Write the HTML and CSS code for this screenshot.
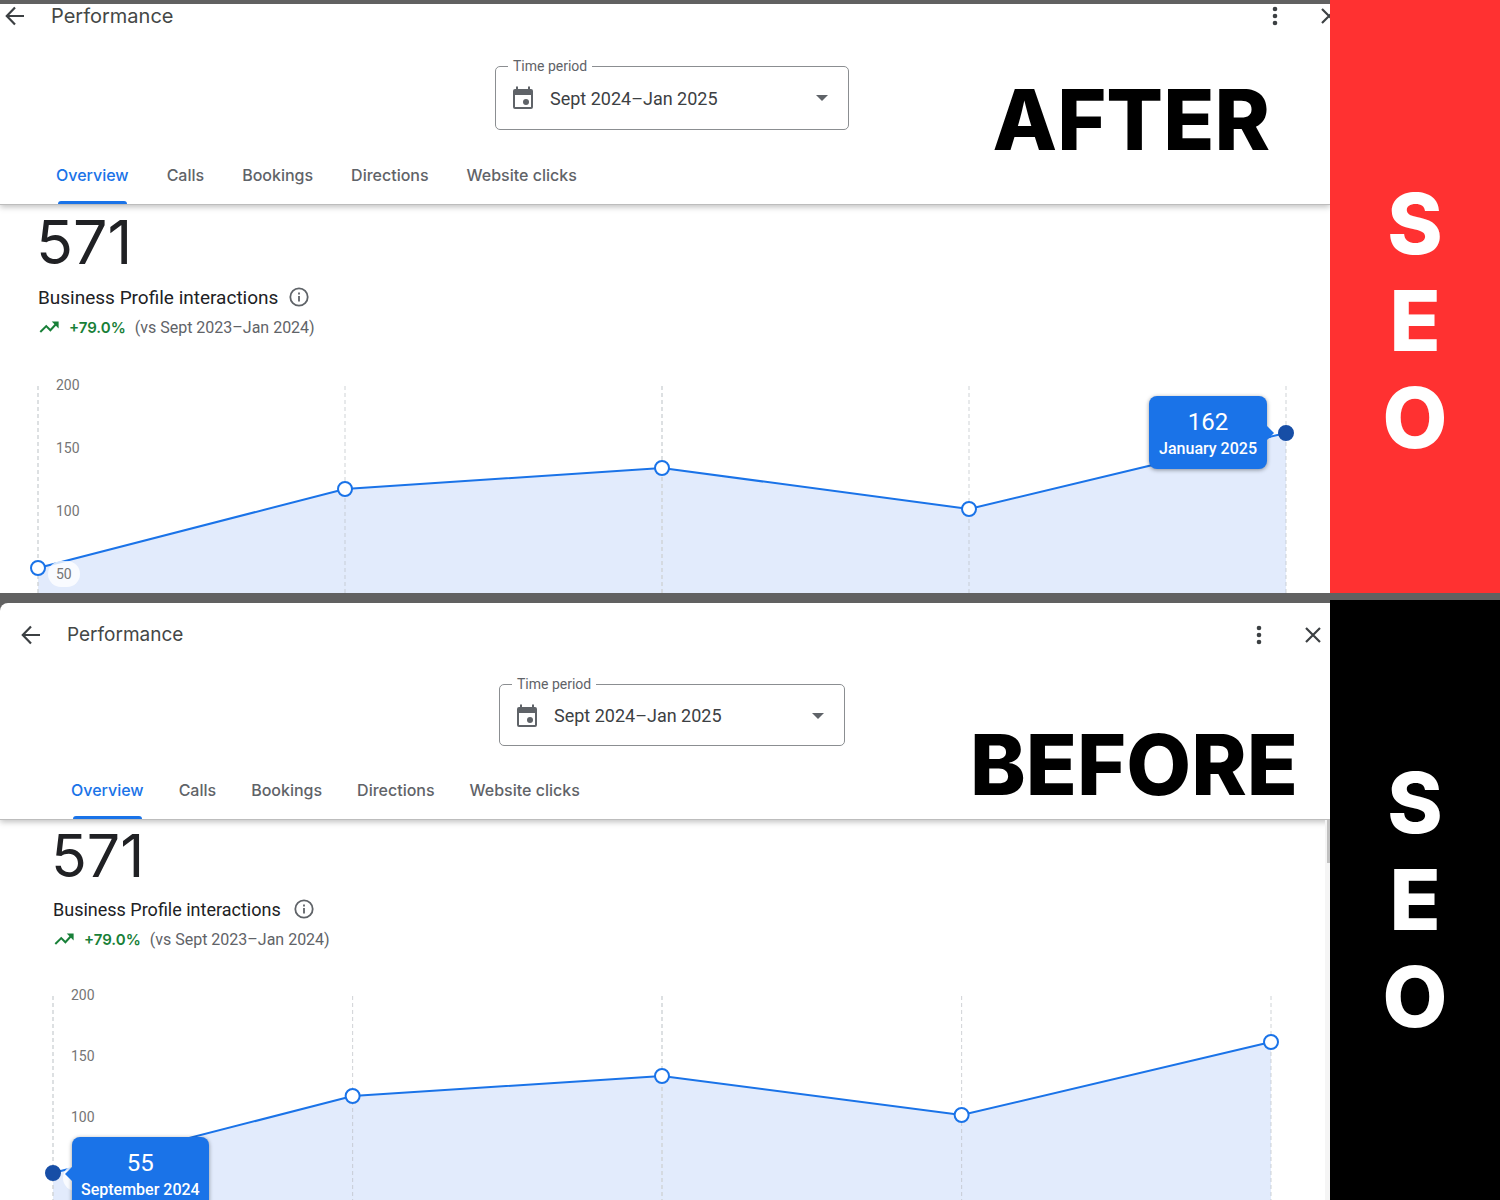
FILE: index.html
```
<!DOCTYPE html>
<html lang="en">
<head>
    <meta charset="UTF-8">
    <meta name="viewport" content="width=device-width, initial-scale=1.0">
    <title>Performance - Before and After SEO</title>
    <link rel="stylesheet" href="styles.css">
</head>
<body>
    <!-- shared icons -->
    <svg class="icon-defs" aria-hidden="true">
        <symbol id="icon-back" viewBox="0 0 24 24">
            <path d="M12 3.5L3.8 12l8.2 8.5M4 12h17" fill="none" stroke="currentColor" stroke-width="2.2"/>
        </symbol>
        <symbol id="icon-more" viewBox="0 0 24 24">
            <circle cx="12" cy="5" r="2.3"/><circle cx="12" cy="12" r="2.3"/><circle cx="12" cy="19" r="2.3"/>
        </symbol>
        <symbol id="icon-close" viewBox="0 0 24 24">
            <path d="M5 5l14 14M19 5L5 19" fill="none" stroke="currentColor" stroke-width="2.2"/>
        </symbol>
        <symbol id="icon-calendar" viewBox="0 0 24 24">
            <path fill-rule="evenodd" d="M5 1.500h2V4h10V1.500h2V4h1a2 2 0 0 1 2 2v16a2 2 0 0 1-2 2H4a2 2 0 0 1-2-2V6a2 2 0 0 1 2-2h1zM4 10v12h16V10z"/>
            <circle cx="15" cy="17" r="3"/>
        </symbol>
        <symbol id="icon-info" viewBox="0 0 24 24">
            <circle cx="12" cy="12" r="8.7" fill="none" stroke="currentColor" stroke-width="1.8"/>
            <path d="M11.100 11h1.800v5.500h-1.800zM11.100 7.500h1.800v1.900h-1.800z"/>
        </symbol>
        <symbol id="icon-trend" viewBox="0 0 24 24">
            <path d="M2.500 17.500l6.500-6.500 4.500 4.500L20 8.500" fill="none" stroke="currentColor" stroke-width="2.2"/>
            <path d="M15 6h7.500v7.500z"/>
        </symbol>
    </svg>

    <main class="comparison">
        <section class="panel after">
            <header class="app-bar">
                <button type="button" class="icon-button" aria-label="Back"><svg><use href="#icon-back"/></svg></button>
                <h1>Performance</h1>
                <button type="button" class="icon-button" aria-label="More options"><svg><use href="#icon-more"/></svg></button>
                <button type="button" class="icon-button" aria-label="Close"><svg><use href="#icon-close"/></svg></button>
            </header>
            <div class="picker">
                <label for="period-after">Time period</label>
                <svg class="calendar"><use href="#icon-calendar"/></svg>
                <select id="period-after">
                    <option>Sept 2024–Jan 2025</option>
                </select>
            </div>
            <p class="stamp">AFTER</p>
            <nav class="tabs">
                <a href="#" class="active">Overview</a>
                <a href="#">Calls</a>
                <a href="#">Bookings</a>
                <a href="#">Directions</a>
                <a href="#">Website clicks</a>
            </nav>
            <div class="stats">
                <p class="value">571</p>
                <p class="caption">Business Profile interactions <svg><use href="#icon-info"/></svg></p>
                <p class="delta"><svg><use href="#icon-trend"/></svg> <strong>+79.0%</strong> <span>(vs Sept 2023–Jan 2024)</span></p>
            </div>
            <div class="chart">
                <svg class="plot">
                    <svg viewBox="0 0 1000 207" preserveAspectRatio="none">
                        <polygon class="area" points="0,182 246,103 500,82 746,123 1000,47 1000,207 0,207"/>
                        <polyline class="line" points="0,182 246,103 500,82 746,123 1000,47"/>
                    </svg>
                    <g class="guides">
                        <line x1="0" x2="0" y2="100%" class="strong"/>
                        <line x1="24.6%" x2="24.6%" y2="100%"/>
                        <line x1="50%" x2="50%" y2="100%" class="strong"/>
                        <line x1="74.6%" x2="74.6%" y2="100%"/>
                        <line x1="100%" x2="100%" y2="100%"/>
                    </g>
                    <g class="points">
                        <circle cx="0" cy="182" r="7"/>
                        <circle cx="24.6%" cy="103" r="7"/>
                        <circle cx="50%" cy="82" r="7"/>
                        <circle cx="74.6%" cy="123" r="7"/>
                        <circle cx="100%" cy="47" r="7" class="selected"/>
                    </g>
                </svg>
                <ul class="axis">
                    <li><span>200</span></li>
                    <li><span>150</span></li>
                    <li><span>100</span></li>
                    <li><span>50</span></li>
                </ul>
                <div class="tooltip">
                    <b>162</b>
                    <span>January 2025</span>
                </div>
            </div>
        </section>
        <aside class="banner red">
            <span>S</span>
            <span>E</span>
            <span>O</span>
        </aside>

        <section class="panel before">
            <header class="app-bar">
                <button type="button" class="icon-button" aria-label="Back"><svg><use href="#icon-back"/></svg></button>
                <h1>Performance</h1>
                <button type="button" class="icon-button" aria-label="More options"><svg><use href="#icon-more"/></svg></button>
                <button type="button" class="icon-button" aria-label="Close"><svg><use href="#icon-close"/></svg></button>
            </header>
            <div class="picker">
                <label for="period-before">Time period</label>
                <svg class="calendar"><use href="#icon-calendar"/></svg>
                <select id="period-before">
                    <option>Sept 2024–Jan 2025</option>
                </select>
            </div>
            <p class="stamp">BEFORE</p>
            <nav class="tabs">
                <a href="#" class="active">Overview</a>
                <a href="#">Calls</a>
                <a href="#">Bookings</a>
                <a href="#">Directions</a>
                <a href="#">Website clicks</a>
            </nav>
            <div class="stats">
                <div class="scrollbar"></div>
                <p class="value">571</p>
                <p class="caption">Business Profile interactions <svg><use href="#icon-info"/></svg></p>
                <p class="delta"><svg><use href="#icon-trend"/></svg> <strong>+79.0%</strong> <span>(vs Sept 2023–Jan 2024)</span></p>
            </div>
            <div class="chart">
                <svg class="plot">
                    <svg viewBox="0 0 1000 204" preserveAspectRatio="none">
                        <polygon class="area" points="0,177 246,100 500,80 746,119 1000,46 1000,204 0,204"/>
                        <polyline class="line" points="0,177 246,100 500,80 746,119 1000,46"/>
                    </svg>
                    <g class="guides">
                        <line x1="0" x2="0" y2="100%" class="strong"/>
                        <line x1="24.6%" x2="24.6%" y2="100%"/>
                        <line x1="50%" x2="50%" y2="100%" class="strong"/>
                        <line x1="74.6%" x2="74.6%" y2="100%"/>
                        <line x1="100%" x2="100%" y2="100%"/>
                    </g>
                    <g class="points">
                        <circle cx="0" cy="177" r="7" class="selected"/>
                        <circle cx="24.6%" cy="100" r="7"/>
                        <circle cx="50%" cy="80" r="7"/>
                        <circle cx="74.6%" cy="119" r="7"/>
                        <circle cx="100%" cy="46" r="7"/>
                    </g>
                </svg>
                <!-- lowest label sits behind the tooltip, so its pill is empty -->
                <ul class="axis">
                    <li><span>200</span></li>
                    <li><span>150</span></li>
                    <li><span>100</span></li>
                    <li><span></span></li>
                </ul>
                <div class="tooltip">
                    <b>55</b>
                    <span>September 2024</span>
                </div>
            </div>
        </section>
        <aside class="banner black">
            <span>S</span>
            <span>E</span>
            <span>O</span>
        </aside>
    </main>
</body>
</html>
```
FILE: styles.css
```
* {
    box-sizing: border-box;
}
body {
    margin: 0;
    background-color: #616161;
    color: #202124;
    font-family: Roboto, Arial, sans-serif;
}
h1, p, ul {
    margin: 0;
    padding: 0;
}
svg {
    fill: currentColor;
}
.icon-defs {
    display: none;
}
.comparison {
    display: grid;
    grid-template-columns: 1fr 170px;
}

/* Panels */
.panel {
    position: relative;
    overflow: hidden;
    background-color: #fff;
}
.after {
    --edge: 38px;
    margin-top: 4px;
}
.before {
    --edge: 53px;
    margin-top: 10px;
    border-top-left-radius: 8px;
}

/* Top bar */
.app-bar {
    display: flex;
    align-items: center;
    height: 24px;
    color: #3c4043;
}
.after .app-bar {
    margin: 0 -11px 0 3px;
}
.before .app-bar {
    margin: 20px 5px 0 19px;
}
.app-bar h1 {
    flex: 1;
    margin-left: 24px;
    font-family: Inter, sans-serif;
    font-size: 20px;
    font-weight: 400;
    line-height: 24px;
    color: #444746;
}
.before .app-bar h1 {
    font-size: 19px;
}
.icon-button {
    width: 24px;
    height: 24px;
    padding: 0;
    border: 0;
    background: none;
    color: inherit;
}
.icon-button + .icon-button {
    margin-left: 30px;
}
.icon-button svg {
    display: block;
    width: 24px;
    height: 24px;
}

/* Time period */
.picker {
    position: relative;
    width: 354px;
    margin: 38px auto 0;
    left: 7px;
}
.before .picker {
    width: 346px;
    margin-top: 37px;
}
.picker label {
    position: absolute;
    top: -8px;
    left: 13px;
    padding: 0 5px;
    background-color: #fff;
    color: #5f6368;
    font-size: 14px;
    line-height: 16px;
}
.picker select {
    display: block;
    width: 100%;
    height: 64px;
    padding: 0 54px;
    border: 1px solid #8b8e91;
    border-radius: 5px;
    background: none;
    color: #3c4043;
    font-family: inherit;
    font-size: 18px;
    appearance: none;
}
.before .picker select {
    height: 62px;
}
.picker .calendar {
    position: absolute;
    top: 19px;
    left: 16px;
    width: 24px;
    height: 24px;
    color: #5f6368;
}
.picker::after {
    content: "";
    position: absolute;
    top: 29px;
    right: 21px;
    border: 6px solid transparent;
    border-top-color: #5f6368;
    border-bottom: 0;
}

/* Big words over the panel and in the side column */
.stamp, .banner {
    font-family: Inter, sans-serif;
    font-size: 84px;
    font-weight: 800;
    line-height: 97px;
}
.stamp {
    position: absolute;
    top: 67px;
    right: 60px;
    z-index: 1;
    color: #000;
}
.before .stamp {
    top: 113px;
    right: 32px;
}
.banner {
    display: flex;
    flex-direction: column;
    align-items: center;
    color: #fff;
}
.red {
    padding-top: 175px;
    background-color: #ff3131;
}
.black {
    margin-top: 7px;
    padding-top: 154px;
    background-color: #000;
}

/* Tabs */
.tabs {
    display: flex;
    gap: 38px;
    height: 59px;
    margin-top: 16px;
    padding-left: 56px;
    border-bottom: 1px solid #bdbdbd;
    box-shadow: 0 2px 6px rgba(0, 0, 0, 0.25);
    clip-path: inset(0 0 -12px 0);
}
.before .tabs {
    gap: 35px;
    margin-top: 15px;
    padding-left: 71px;
}
.tabs a {
    position: relative;
    color: #5f6368;
    font-family: Inter, sans-serif;
    font-size: 16px;
    font-weight: 500;
    line-height: 58px;
    text-decoration: none;
}
.tabs .active {
    color: #1a73e8;
}
.tabs .active::after {
    content: "";
    position: absolute;
    right: 2px;
    bottom: 0;
    left: 2px;
    height: 3px;
    border-radius: 3px 3px 0 0;
    background-color: #1a73e8;
}

/* Numbers */
.stats {
    padding-left: var(--edge);
}
.value {
    margin-left: -2px;
    font-family: Inter, sans-serif;
    font-size: 61px;
    line-height: 74px;
}
.caption, .delta {
    display: flex;
    align-items: center;
    height: 24px;
}
.caption {
    gap: 9px;
    margin-top: 6px;
    font-size: 19px;
}
.caption svg {
    width: 24px;
    height: 24px;
    color: #5f6368;
}
.delta {
    gap: 9px;
    margin-top: 6px;
    color: #5f6368;
    font-size: 16px;
}
.delta svg {
    width: 22px;
    height: 22px;
    color: #188038;
}
.delta strong {
    color: #188038;
    font-family: Inter, sans-serif;
    font-size: 15px;
    font-weight: 600;
}
.before .value {
    font-size: 59px;
    line-height: 72px;
}
.before .caption {
    gap: 11px;
    margin-top: 5px;
    font-size: 18px;
}
.scrollbar {
    position: absolute;
    top: 217px;
    right: 0;
    bottom: 0;
    width: 5px;
    border-left: 2px solid #f5f5f5;
    background: linear-gradient(#c1c1c1 43px, #f5f5f5 43px);
}

/* Chart */
.chart {
    position: relative;
    height: 207px;
    margin: 47px 44px 0 var(--edge);
}
.before .chart {
    height: 204px;
    margin-top: 45px;
    margin-right: 59px;
}
.plot {
    position: absolute;
    width: 100%;
    height: 100%;
    overflow: visible;
}
.plot svg {
    overflow: visible;
}
.area {
    fill: #e2ebfc;
}
.line {
    fill: none;
    stroke: #1a73e8;
    stroke-width: 2;
    vector-effect: non-scaling-stroke;
}
.guides {
    stroke: #bdc1c6;
    stroke-width: 1;
    stroke-dasharray: 4 3;
    opacity: 0.7;
}
.guides .strong {
    stroke: #d0d3d6;
    stroke-width: 2;
}
.points {
    fill: #fff;
    stroke: #1a73e8;
    stroke-width: 2;
}
.points .selected {
    fill: #174ea6;
    stroke: #174ea6;
}
.axis {
    position: absolute;
    top: -14px;
    left: 10px;
    list-style: none;
    color: #757575;
    font-size: 14px;
    line-height: 26px;
}
.axis li {
    height: 63px;
}
.before .axis li {
    height: 61px;
}
.axis span {
    display: inline-block;
    min-width: 32px;
    height: 26px;
    padding: 0 8px;
    border-radius: 13px;
    background-color: rgba(255, 255, 255, 0.8);
}
.tooltip {
    position: absolute;
    top: 10px;
    right: 19px;
    padding: 12px 10px 8px;
    border-radius: 8px;
    background-color: #1a73e8;
    box-shadow: 0 1px 4px rgba(0, 0, 0, 0.4);
    color: #fff;
    text-align: center;
}
.tooltip b {
    display: block;
    font-size: 24px;
    font-weight: 400;
    line-height: 29px;
}
.tooltip span {
    display: block;
    font-size: 16px;
    font-weight: 500;
    line-height: 24px;
}
.tooltip::after {
    content: "";
    position: absolute;
    top: 30px;
    left: 100%;
    border: 7px solid transparent;
    border-left-color: #1a73e8;
    border-right: 0;
}
.before .tooltip {
    top: 141px;
    right: auto;
    left: 19px;
    padding-right: 9px;
    padding-left: 9px;
}
.before .tooltip::after {
    right: 100%;
    left: auto;
    border-right: 7px solid #1a73e8;
    border-left: 0;
}
```
